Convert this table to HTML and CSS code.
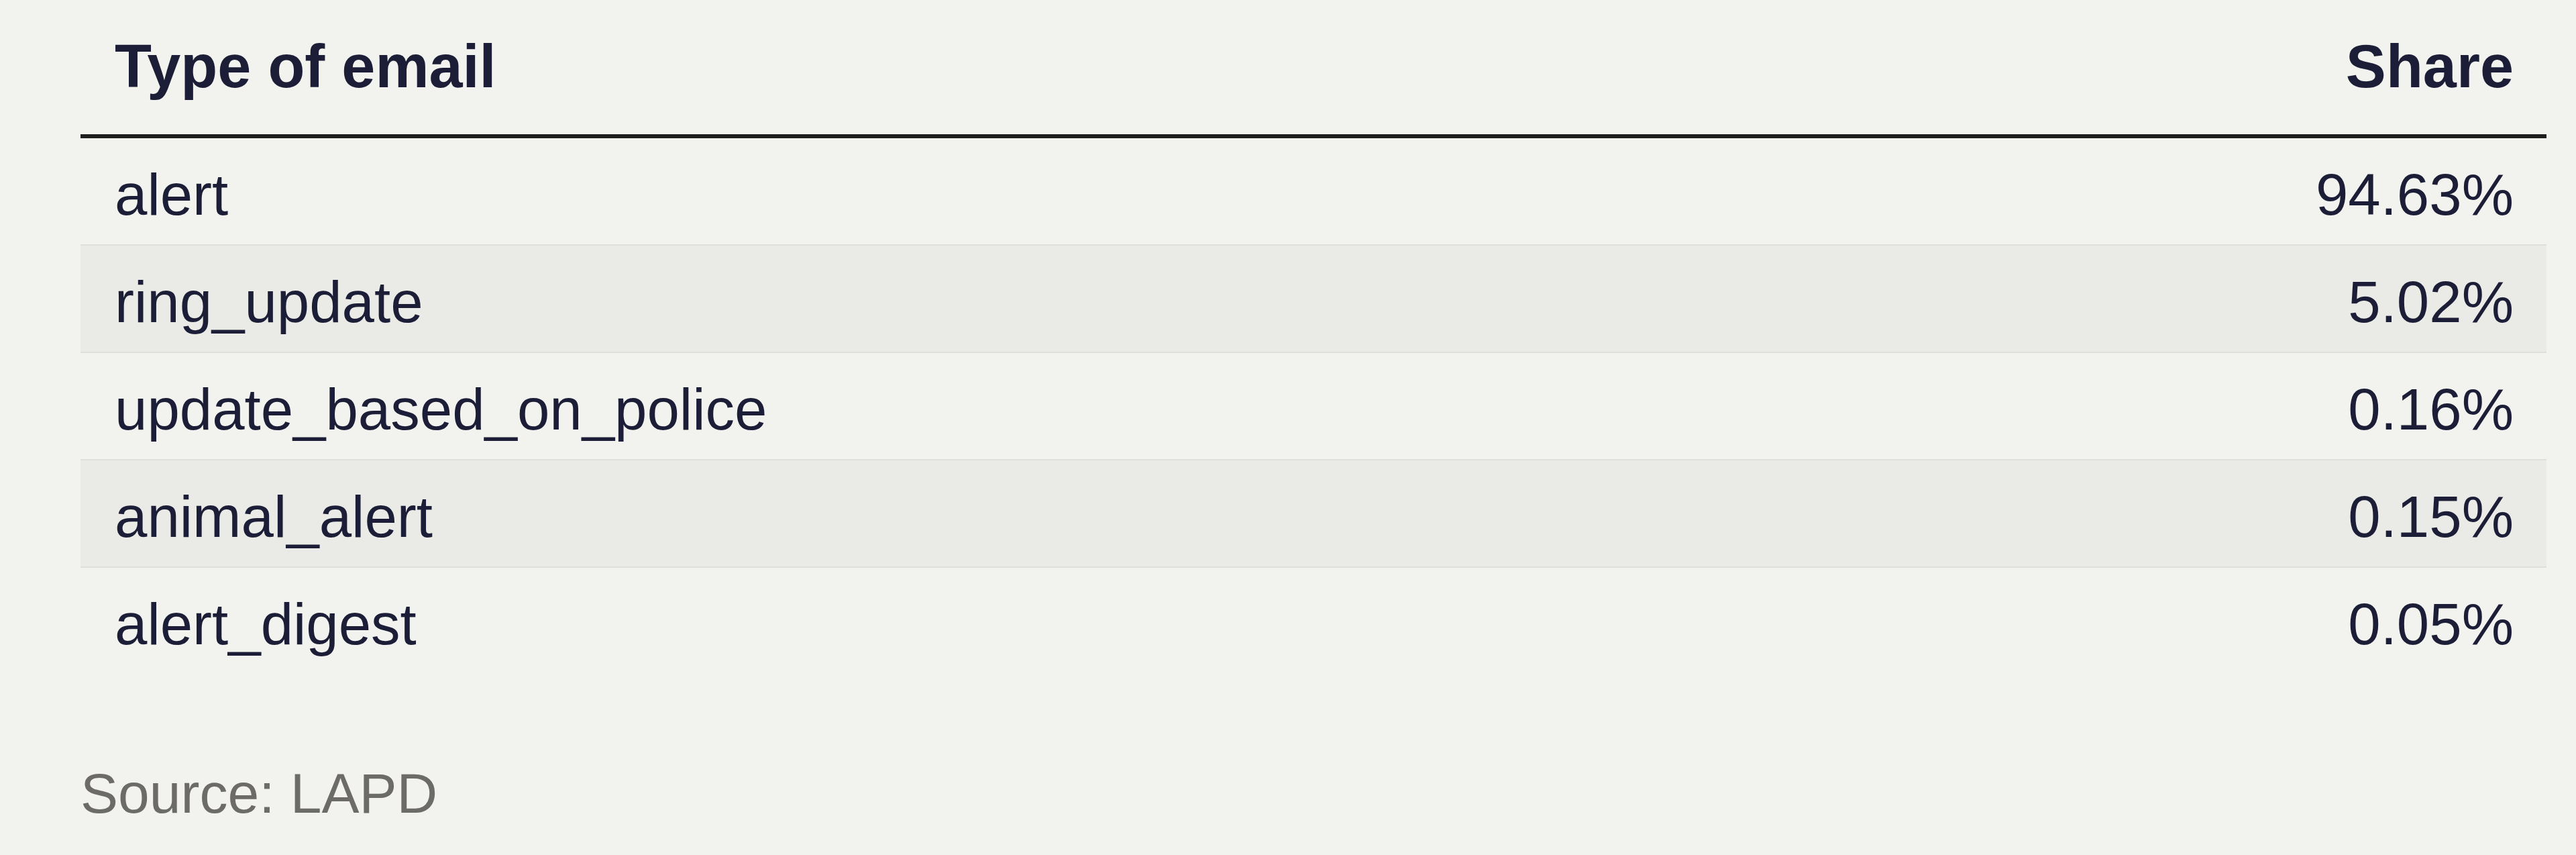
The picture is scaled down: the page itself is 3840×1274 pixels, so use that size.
FILE: index.html
```html
<!DOCTYPE html>
<html lang="en">
<head>
<meta charset="utf-8">
<title>Type of email share</title>
<link rel="stylesheet" href="styles.css">
</head>
<body>
<div class="wrap">
  <table class="data">
    <thead>
      <tr>
        <th class="col-type">Type of email</th>
        <th class="col-share">Share</th>
      </tr>
    </thead>
    <tbody>
      <tr><td class="col-type">alert</td><td class="col-share">94.63%</td></tr>
      <tr><td class="col-type">ring_update</td><td class="col-share">5.02%</td></tr>
      <tr><td class="col-type">update_based_on_police</td><td class="col-share">0.16%</td></tr>
      <tr><td class="col-type">animal_alert</td><td class="col-share">0.15%</td></tr>
      <tr><td class="col-type">alert_digest</td><td class="col-share">0.05%</td></tr>
    </tbody>
  </table>
  <p class="source">Source: LAPD</p>
</div>
</body>
</html>
```
FILE: styles.css
```css
html, body {
  margin: 0;
  padding: 0;
  background: #f2f2ee;
}
body {
  font-family: "Liberation Sans", Arial, sans-serif;
  color: #1b1e36;
}
.wrap {
  padding: 0 44px 0 120px;
}
.data {
  width: 100%;
  border-collapse: collapse;
}
.data th {
  font-weight: 700;
  font-size: 90px;
  line-height: 103px;
  padding: 48px 49px 49px 51px;
  border-bottom: 6px solid #1e1e1e;
}
.data td {
  font-size: 87px;
  line-height: 103px;
  padding: 32px 49px 23px 51px;
  border-bottom: 2px solid #e0e0db;
}
.data tbody tr:nth-child(even) td {
  background: #eaeae6;
}
.data tbody tr:last-child td {
  border-bottom: none;
}
.col-type {
  text-align: left;
}
.col-share {
  text-align: right;
}
.source {
  margin: 127px 0 0 0;
  font-size: 84px;
  line-height: 103px;
  color: #6d6b67;
}
```
